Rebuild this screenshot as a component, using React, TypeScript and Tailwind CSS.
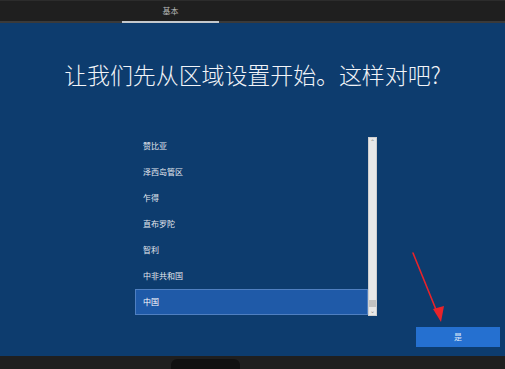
import React from "react";

const items = ["赞比亚", "泽西岛管区", "乍得", "直布罗陀", "智利", "中非共和国", "中国"];

export default function App() {
  const font = { fontFamily: '"Noto Sans CJK SC", "Noto Sans", sans-serif' };
  return (
    <div className="relative w-[505px] h-[369px] overflow-hidden flex flex-col bg-[#1f1f1f]" style={font}>
      {/* top bar */}
      <div className="h-[23px] flex flex-col border-t border-[#2c2c2c]">
        <div className="flex-1 flex">
          <div className="ml-[122px] w-[97px] flex items-center justify-center text-[8px] text-[#b8b8b8]">基本</div>
        </div>
        <div className="h-[2px] bg-[#3a3a3a] flex">
          <div className="ml-[122px] w-[97px] bg-[#c4c8cc]" />
        </div>
      </div>
      {/* main */}
      <div className="h-[336px] bg-[#0d3c6e] flex flex-col">
        <div className="pt-[36px] h-[66px] text-center text-[23px] leading-[30px] font-light text-[#f2f4f8] tracking-[-0.1px]">
          让我们先从区域设置开始。这样对吧?
        </div>
        <div className="mt-[48px] ml-[135px] w-[242px] h-[179px] flex">
          <div className="flex-1 overflow-hidden">
            <div className="mt-[-4px] flex flex-col">
              {items.map((t, i) =>
                i === items.length - 1 ? (
                  <div key={t} className="h-[26px] flex items-center pl-[7px] bg-[#1f5aa8] border border-[#4f7fc0] text-[8px] text-white">
                    {t}
                  </div>
                ) : (
                  <div key={t} className="h-[26px] flex items-center pl-[8px] text-[8px] text-[#e4e8ee]">
                    {t}
                  </div>
                )
              )}
            </div>
          </div>
          <div className="w-[9px] bg-[#e8e8e8] border border-[#cfcfcf] flex flex-col items-center">
            <div className="h-[7px] text-[6px] leading-[7px] text-[#888]">⌃</div>
            <div className="flex-1" />
            <div className="w-full h-[7px] bg-[#c2c2c2]" />
            <div className="h-[8px] text-[6px] leading-[8px] text-[#888]">⌄</div>
          </div>
        </div>
        <div className="mt-[11px] ml-[416px] w-[84px] h-[20px] bg-[#2570d0] flex items-center justify-center text-[8px] text-[#dce8f8]">
          是
        </div>
      </div>
      {/* bottom bar */}
      <div className="flex-1 bg-[#1f1f1f] flex">
        <div className="ml-[171px] mt-[3px] w-[69px] h-[10px] rounded-t-[6px] bg-[#111111]" />
      </div>
      {/* red arrow */}
      <svg className="absolute left-0 top-0" width="505" height="369" viewBox="0 0 505 369">
        <line x1="413" y1="253" x2="437" y2="312" stroke="#e8232a" strokeWidth="1.6" strokeLinecap="round" />
        <polygon points="433,309 444,306 441,322" fill="#e8232a" />
      </svg>
    </div>
  );
}
